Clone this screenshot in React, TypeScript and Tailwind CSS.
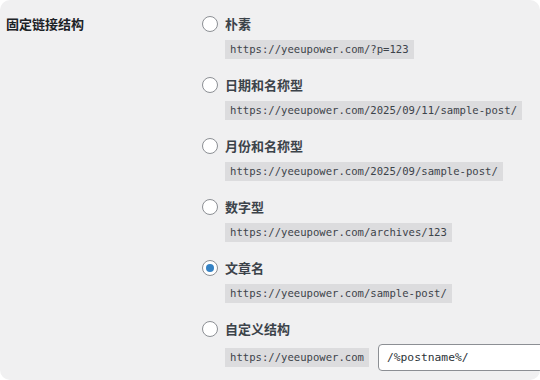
const options = [
  { label: "朴素", url: "https://yeeupower.com/?p=123" },
  { label: "日期和名称型", url: "https://yeeupower.com/2025/09/11/sample-post/" },
  { label: "月份和名称型", url: "https://yeeupower.com/2025/09/sample-post/" },
  { label: "数字型", url: "https://yeeupower.com/archives/123" },
  { label: "文章名", url: "https://yeeupower.com/sample-post/", checked: true },
];

function Radio({ checked }: { checked?: boolean }) {
  return (
    <span className="flex h-4 w-4 shrink-0 items-center justify-center rounded-full border border-[#8c8f94] bg-white">
      {checked && <span className="h-2 w-2 rounded-full bg-[#3582c4]" />}
    </span>
  );
}

function Code({ children }: { children: React.ReactNode }) {
  return (
    <code className="block h-[19px] bg-[#dcdcde] px-[5px] font-['DejaVu_Sans_Mono',monospace] text-[10.6px] leading-[19px] text-[#3c434a]">
      {children}
    </code>
  );
}

export default function App() {
  return (
    <div className="h-[380px] w-[540px] bg-white">
      <div className="flex h-full w-full overflow-hidden rounded-[10px] bg-[#f0f0f1] pt-[14px] font-['Noto_Sans_CJK_SC',sans-serif]">
        <div className="w-[202px] shrink-0 pl-[6px] text-[13px] font-bold leading-5 text-[#1d2327]">
          固定链接结构
        </div>
        <div className="flex flex-1 flex-col gap-4">
          {options.map((o) => (
            <div key={o.label} className="flex flex-col gap-[6px]">
              <label className="flex h-5 items-center gap-[7px] text-[13px] font-bold leading-5 text-[#3c434a]">
                <Radio checked={o.checked} />
                {o.label}
              </label>
              <div className="flex pl-[23px]">
                <Code>{o.url}</Code>
              </div>
            </div>
          ))}
          <div className="flex flex-col gap-[5px]">
            <label className="flex h-5 items-center gap-[7px] text-[13px] font-bold leading-5 text-[#3c434a]">
              <Radio />
              自定义结构
            </label>
            <div className="flex items-center gap-[9px] pl-[23px]">
              <Code>https://yeeupower.com</Code>
              <input
                readOnly
                value="/%postname%/"
                className="h-[27px] w-[200px] shrink-0 rounded-[4px] border border-[#8c8f94] bg-white px-2 font-['DejaVu_Sans_Mono',monospace] text-[11.3px] text-[#2c3338] outline-none"
              />
            </div>
          </div>
        </div>
      </div>
    </div>
  );
}
